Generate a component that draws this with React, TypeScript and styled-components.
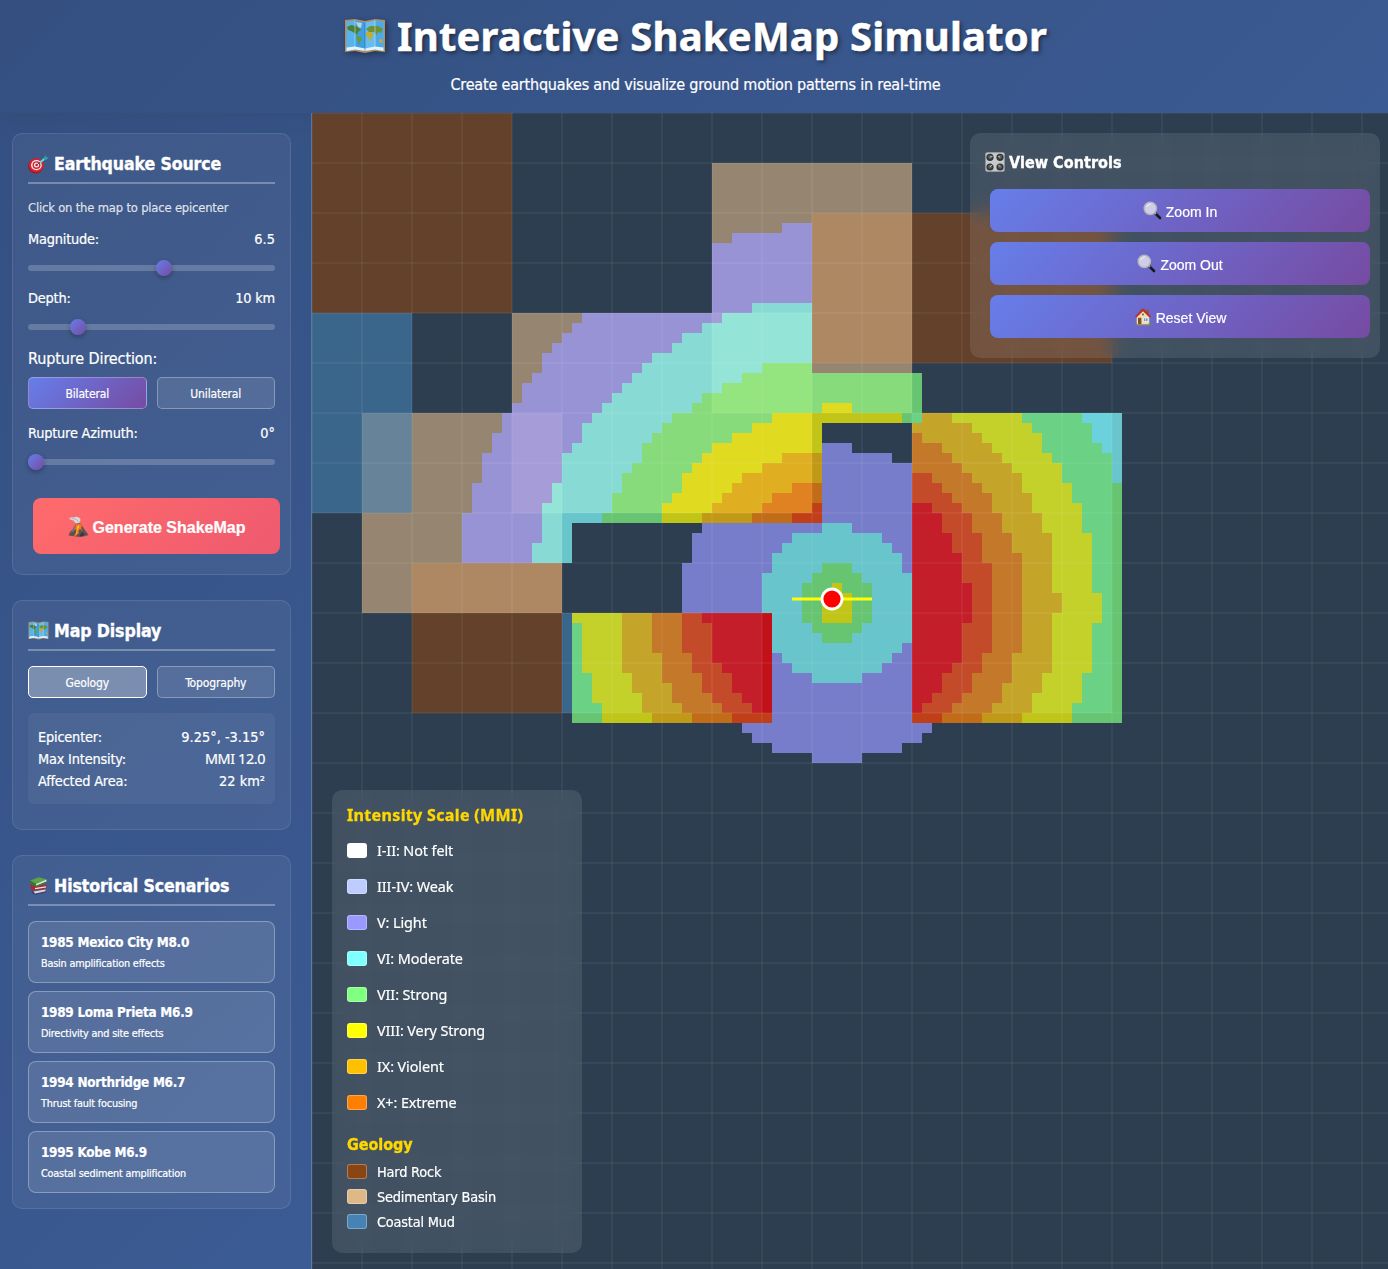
import React, { useState } from "react";
import styled, { createGlobalStyle, css } from "styled-components";

const ui = `"DejaVu Sans Condensed", "DejaVu Sans", sans-serif`;
const serifedI = `"Noto Sans", "DejaVu Sans", sans-serif`;
const arial = `"Liberation Sans", Arial, sans-serif`;
const accent = "linear-gradient(135deg, #667eea 0%, #764ba2 100%)";

const Global = createGlobalStyle`
  * { box-sizing: border-box; margin: 0; padding: 0; }
  body {
    margin: 0;
    overflow: hidden;
    color: #fff;
    font-family: ${ui};
    letter-spacing: -0.012em;
    -webkit-text-stroke: 0.2px;
    background: linear-gradient(135deg, #1e3c72 0%, #2a5298 100%);
    height: 100vh;
  }
`;

const Page = styled.div`
  display: flex;
  flex-direction: column;
  height: 100vh;
`;

const Header = styled.header`
  height: 113px;
  padding: 9px 0 0 3px;
  display: flex;
  flex-direction: column;
  align-items: center;
  background: rgba(255, 255, 255, 0.1);
  box-shadow: 0 2px 20px rgba(0, 0, 0, 0.1);
`;

const Title = styled.h1`
  display: flex;
  align-items: center;
  gap: 11px;
  height: 54px;
  font: 700 40px / 54px ${serifedI};
  letter-spacing: 0.2px;
  -webkit-text-stroke: 0.5px;
  text-shadow: 2px 2px 4px rgba(0, 0, 0, 0.5);
  svg { filter: drop-shadow(2px 2px 3px rgba(0, 0, 0, 0.4)); }
`;

const Subtitle = styled.p`
  margin-top: 12px;
  font-size: 16px;
  line-height: 20px;
`;

const Body = styled.div`
  flex: 1;
  min-height: 0;
  display: grid;
  grid-template-columns: 312px 1fr;
`;

const Sidebar = styled.aside`
  padding: 20px 20px 20px 12px;
  display: flex;
  flex-direction: column;
  gap: 25px;
  background: rgba(255, 255, 255, 0.1);
  border-right: 1px solid rgba(255, 255, 255, 0.2);
`;

const Section = styled.section<{ $h: number }>`
  height: ${(p) => p.$h}px;
  padding: 15px;
  border: 1px solid rgba(255, 255, 255, 0.1);
  border-radius: 10px;
  background: rgba(255, 255, 255, 0.05);
`;

const Heading = styled.h2`
  display: flex;
  gap: 5px;
  height: 35px;
  margin-bottom: 15px;
  border-bottom: 2px solid rgba(255, 255, 255, 0.3);
  font-size: 17.6px;
  line-height: 30px;
  letter-spacing: -0.12px;
  -webkit-text-stroke: 0.35px;
  svg { margin-top: 5px; }
`;

const Hint = styled.p`
  margin-bottom: 15px;
  font-size: 12.9px;
  line-height: 17px;
  letter-spacing: -0.19px;
  color: rgba(255, 255, 255, 0.8);
`;

const Row = styled.div`
  display: flex;
  justify-content: space-between;
  font-size: 14.4px;
  line-height: 17px;
`;

const Label = styled.div`
  margin: 0 0 9px;
  font-size: 16px;
  line-height: 19px;
  letter-spacing: -0.1px;
`;

const Range = styled.input`
  display: block;
  width: 100%;
  height: 6px;
  margin: 17px 0 19px;
  appearance: none;
  border-radius: 3px;
  background: rgba(255, 255, 255, 0.2);
  &::-webkit-slider-thumb {
    appearance: none;
    width: 16px;
    height: 16px;
    border-radius: 50%;
    background: ${accent};
    box-shadow: 0 2px 5px rgba(0, 0, 0, 0.3);
  }
`;

const Pair = styled.div<{ $gap: number }>`
  display: flex;
  gap: 10px;
  margin-bottom: ${(p) => p.$gap}px;
`;

const Toggle = styled.button<{ $look?: "gradient" | "light" }>`
  flex: 1;
  height: 32px;
  padding-top: 2px;
  border: 1px solid rgba(255, 255, 255, 0.3);
  border-radius: 5px;
  background: rgba(255, 255, 255, 0.1);
  color: #fff;
  font: 12px ${ui};
  letter-spacing: -0.012em;
  -webkit-text-stroke: 0.2px;
  ${(p) => p.$look === "gradient" && css`background: ${accent};`}
  ${(p) => p.$look === "light" && css`background: rgba(255, 255, 255, 0.3); border-color: #fff;`}
`;

const Button = styled.button<{ $primary?: boolean }>`
  display: flex;
  align-items: center;
  justify-content: center;
  gap: 4px;
  width: 100%;
  height: 43px;
  margin-left: 5px;
  padding-top: 2px;
  border: 0;
  border-radius: 8px;
  background: ${accent};
  color: #fff;
  font: 14px ${arial};
  letter-spacing: 0;
  -webkit-text-stroke: 0.2px;
  svg { margin-top: -2px; }
  ${(p) =>
    p.$primary &&
    css`
      height: 56px;
      margin-top: 33px;
      padding-top: 3px;
      background: linear-gradient(135deg, #ff6b6b, #ee5a6f);
      font-weight: 700;
      font-size: 16px;
    `}
`;

const Info = styled.div`
  padding: 13px 10px 12px;
  border-radius: 6px;
  background: rgba(255, 255, 255, 0.05);
  ${Row} { line-height: 22px; }
`;

const Value = styled.span`
  letter-spacing: 0.02px;
`;

const NumeralValue = styled.span`
  font-family: ${serifedI};
  letter-spacing: -0.4px;
`;

const Scenarios = styled.div`
  display: flex;
  flex-direction: column;
  gap: 8px;
`;

const Scenario = styled.div`
  height: 62px;
  padding: 12px;
  border: 1px solid rgba(255, 255, 255, 0.3);
  border-radius: 8px;
  background: rgba(255, 255, 255, 0.1);
`;

const ScenarioName = styled.div`
  font-weight: 700;
  font-size: 13.4px;
  line-height: 17px;
  letter-spacing: -0.26px;
`;

const ScenarioNote = styled.div`
  margin-top: 6px;
  font-size: 10.8px;
  line-height: 13px;
`;

const MapArea = styled.main`
  position: relative;
  overflow: hidden;
  background: #2c3e50;
`;

const MapSvg = styled.svg`
  display: block;
  width: 1076px;
  height: 1156px;
`;

const Floating = styled.div`
  position: absolute;
  border-radius: 10px;
  background: rgba(255, 255, 255, 0.1);
  backdrop-filter: blur(10px);
`;

const ViewPanel = styled(Floating)`
  top: 20px;
  right: 8px;
  width: 410px;
  height: 225px;
  padding: 15px;
`;

const ViewTitle = styled.h4`
  display: flex;
  align-items: center;
  gap: 4px;
  height: 28px;
  margin-bottom: 13px;
  font-size: 16px;
  letter-spacing: 0.05px;
  -webkit-text-stroke: 0.35px;
`;

const Stack = styled.div`
  display: flex;
  flex-direction: column;
  gap: 10px;
`;

const Legend = styled(Floating)`
  top: 677px;
  left: 20px;
  width: 250px;
  padding: 15px 15px 19px;
`;

const LegendTitle = styled.h4<{ $second?: boolean }>`
  margin: ${(p) => (p.$second ? "15px 0 4px" : "0 0 7px")};
  color: #ffd700;
  font: 700 16px / 20px ${(p) => (p.$second ? ui : serifedI)};
  letter-spacing: ${(p) => (p.$second ? "-0.05px" : "0.35px")};
  -webkit-text-stroke: 0.35px;
`;

const Item = styled.div<{ $h: number; $numeral?: boolean }>`
  display: flex;
  align-items: center;
  gap: 10px;
  height: ${(p) => p.$h}px;
  font-size: 14.4px;
  ${(p) => p.$numeral && css`font-family: ${serifedI}; letter-spacing: -0.006em;`}
`;

const Swatch = styled.span<{ $c: string }>`
  width: 20px;
  height: 15px;
  border: 1px solid rgba(255, 255, 255, 0.3);
  border-radius: 3px;
  background: ${(p) => p.$c};
`;

/* Icons */

const MapIcon = ({ w, h }: { w: number; h: number }) => (
  <svg width={w} height={h} viewBox="0 0 42 36" preserveAspectRatio="none">
    <path d="M1 2L11 1L21 3L31 1L41 2V34L31 33L21 35L11 33L1 34Z" fill="#b98d5c" />
    <path d="M2.5 3.500L11 2.500L21 4.500V33L11 31.500L2.500 33Z" fill="#55b4ee" />
    <path d="M21 4.500L31 2.500L39.500 3.500V33L31 31.500L21 33Z" fill="#66bdf2" />
    <path d="M11 2.500L21 4.500V33L11 31.500Z" fill="#3f9fe0" />
    <path d="M31 2.500L39.500 3.500V33L31 31.500Z" fill="#4caae6" />
    <path d="M2.500 29.500L11 28.500L21 30.500L31 28.500L39.500 29.500V33L31 31.500L21 33L11 31.500L2.500 33Z" fill="#e3f3fb" />
    <path d="M3 9L7 7L12 8L15 10L17 12L14 14L13 17L10.500 15L7 13L4 12Z" fill="#4f7f35" />
    <path d="M12 4L18 5L17 10L14 9Z" fill="#b9d4dc" />
    <path d="M13 17.500L17 19L18 21L16 24L15 27L14 24L12.500 20Z" fill="#6b9a38" />
    <path d="M22 11L26 8L34 8L39 11L37 15L34 14L33 17L30 14L25 14Z" fill="#6f9138" />
    <path d="M22 14L28 14L29.500 17L27.500 20L26 24L24.500 20L22 17.500Z" fill="#bfae3c" />
    <path d="M35 22L38 21L38.500 24.500L36 25Z" fill="#e0a030" />
    <path d="M11 2.500V31.500M31 2.500V31.500" stroke="#d9f0fb" strokeWidth=".7" opacity=".7" />
    <path d="M21 4.500V33" stroke="#2470a8" strokeWidth=".8" opacity=".7" />
  </svg>
);

const DartIcon = () => (
  <svg width="21" height="20" viewBox="0 0 21 20">
    <ellipse cx="7.800" cy="12" rx="7.600" ry="7.500" fill="#a3121c" />
    <ellipse cx="8.300" cy="11.300" rx="7.300" ry="7.100" fill="#d9222d" />
    <ellipse cx="8.400" cy="11.200" rx="5.300" ry="5.100" fill="#f4eeee" />
    <ellipse cx="8.500" cy="11.100" rx="4" ry="3.900" fill="#d2222c" />
    <ellipse cx="8.500" cy="11.100" rx="2.600" ry="2.500" fill="#f4eeee" />
    <circle cx="8.600" cy="11" r="1.300" fill="#c81c28" />
    <path d="M8.600 11L14 6.800" stroke="#555" strokeWidth="1" />
    <path d="M12 8.500L17.500 4" stroke="#6fd6df" strokeWidth="2" />
    <path d="M15.500 4.500L17.500 1L18.300 3L20.800 3.500L18.500 5.800L16.500 6Z" fill="#2f9fa5" />
  </svg>
);

const BooksIcon = () => (
  <svg width="21" height="20" viewBox="0 0 21 20">
    <path d="M3 13L5 15.500L17 13.500L18.500 15L18 16.500L7 18.800L4 17Z" fill="#423f68" />
    <path d="M5.500 15.500L17.500 13.600V15.300L7 17.500Z" fill="#dddbdc" />
    <path d="M2.500 8L6 10.500L18.500 8.500V10L18 12.500L6 14.500L2.500 12Z" fill="#b7232d" />
    <path d="M7 12L18 10.200V11.600L7 13.300Z" fill="#f1e9e2" />
    <path d="M2 4.500L11 1.200L18.500 3.500L8 8Z" fill="#5da544" />
    <path d="M2 4.500L8 8V10.800L3 8Q1 6 2 4.500Z" fill="#327a2e" />
    <path d="M8 8L18.500 3.600V5.500L8 9.800Z" fill="#dfe6d4" />
    <path d="M8 9.800L18.500 5.500V6.800L8 11.300Z" fill="#398038" />
  </svg>
);

const VolcanoIcon = () => (
  <svg width="21" height="21" viewBox="0 0 21 21">
    <path d="M1 2.500Q3.500 .5 5.500 1.500Q9-.3 11 1.800Q13.500 3 11.700 5.500L11 8H8.500Q7 6.500 5.500 4.500Q3 4.500 1 2.500Z" fill="#d7d9dc" />
    <path d="M3 2.800Q6 2 8 3.500Q10 4 10 6" fill="none" stroke="#a9adb3" strokeWidth=".8" />
    <path d="M.5 19.500Q2 15 5 13L8 7.500L12.500 7L15.500 12L20.500 19Q15 21.500 8 20.500Z" fill="#5c5350" />
    <path d="M8 7.500L5.500 13L2.500 17L7 14Z" fill="#867970" />
    <path d="M8 7.500Q10 9 12.500 7L14 10L13 12L15 15L12 13L10.500 15L11 17L7.500 20.300H6L8.500 15L7 12.500Z" fill="#f37721" />
    <path d="M10 9L11.500 11L9.500 13.500L9 17L8 18L9 13Z" fill="#ffc739" />
    <path d="M14 16L16.500 18L15 20.300L11 20.500Z" fill="#38383d" />
  </svg>
);

const KnobsIcon = () => (
  <svg width="20" height="20" viewBox="0 0 20 20">
    <rect x=".3" y=".3" width="19.400" height="19.400" rx="2" fill="#afb2b3" />
    <rect x="1.300" y="1.300" width="17.400" height="17.400" rx="1.500" fill="#c8cacb" />
    {[[5, 5.3], [15, 5.3], [5, 15], [15, 15]].map(([x, y]) => (
      <g key={`${x}-${y}`}>
        <circle cx={x} cy={y} r="3.600" fill="#333638" />
        <circle cx={x} cy={y - 0.3} r="2" fill="#5d6164" />
        <path d={`M${x} ${y - 0.3}l${x < 10 ? 2.6 : -1.8} ${y < 10 ? -0.6 : -2}`} stroke="#d8dadb" strokeWidth=".8" />
      </g>
    ))}
  </svg>
);

const MagnifierIcon = () => (
  <svg width="19" height="19" viewBox="0 0 19 19">
    <path d="M12 12L17 17" stroke="#191919" strokeWidth="2.600" strokeLinecap="round" />
    <path d="M11 11L13 13" stroke="#9b9ba0" strokeWidth="1.800" />
    <circle cx="7.300" cy="7.300" r="6.200" fill="#cfcde8" stroke="#b4b4ba" strokeWidth="1.400" />
    <path d="M3.500 6Q5 3 8 3" fill="none" stroke="#e9e9f6" strokeWidth="1.200" />
  </svg>
);

const HouseIcon = () => (
  <svg width="18" height="18" viewBox="0 0 18 18">
    <rect x="12.500" y="1.500" width="2.200" height="5" fill="#a0522d" />
    <path d="M2.700 8L9 2.500L15.300 8V16.500H2.700Z" fill="#f3dcae" />
    <path d="M.8 8.800L8 .8H10L17.200 8.800L15.500 9.500L9 3.200L2.500 9.500Z" fill="#b5322c" />
    <rect x="4" y="9.800" width="3.400" height="6.700" fill="#80502e" />
    <rect x="9.300" y="9.700" width="4.700" height="4" fill="#fff" />
    <path d="M9.800 10.200h1.700v3H9.800zM12 10.200h1.600v3H12z" fill="#54a6d6" />
    <circle cx="9" cy="6.500" r="1" fill="#7c5a3a" />
    <path d="M.3 17.300Q.5 15.300 3 15.600V17.300ZM14.500 17.300V15.600Q17.500 15.200 17.700 17.300Z" fill="#4f9b35" />
    <rect x="2.700" y="16.200" width="12.600" height="1.200" fill="#a58a6c" />
  </svg>
);

/* Map data: coordinates in 10px cells */

const geology: [string, number, number, number, number][] = [
  ["#8b4513", 0, 0, 20, 20],
  ["#8b4513", 50, 10, 30, 15],
  ["#8b4513", 10, 45, 15, 15],
  ["#deb887", 20, 20, 30, 20],
  ["#deb887", 40, 5, 20, 25],
  ["#deb887", 5, 30, 20, 20],
  ["#4682b4", 0, 20, 10, 20],
  ["#4682b4", 60, 30, 20, 30],
  ["#4682b4", 25, 50, 20, 10],
];

const levels: Record<string, string> = {
  a: "#9999ff",
  b: "#80ffff",
  c: "#80ff80",
  d: "#ffff00",
  e: "#ffc000",
  f: "#ff8000",
  g: "#ff4000",
  h: "#ff0000",
};

/* Each row: start column, then runs of level letter + end column; "." is an empty run. */
const firstRow = 11;
const rows = [
  "47 a50",
  "42 a50",
  "40 a50",
  "40 a50",
  "40 a50",
  "40 a50",
  "40 a50",
  "40 a50",
  "40 a44 b50",
  "27 a41 b50",
  "26 a39 b50",
  "25 a37 b50",
  "24 a36 b50",
  "23 a34 b50",
  "23 a33 b45 c50",
  "22 a32 b43 c61",
  "21 a31 b41 c61",
  "21 a30 b39 c61",
  "20 a29 b38 c51 d54 c61",
  "19 a28 b36 c46 d59 c61 e64 d71 c77 b81",
  "19 a27 b35 c44 d51 .60 e66 d72 c78 b81",
  "18 a27 b34 c42 d51 .60 f61 e67 d73 c78 b81",
  "18 a26 b33 c40 d51 a54 .60 f63 e68 d73 c79 b81",
  "17 a25 b33 c39 d47 e51 a58 .60 f64 e69 d74 c80 b81",
  "17 a25 b32 c38 d45 e51 a60 f65 e70 d75 c80 b81",
  "17 a25 b31 c37 d43 e51 a60 g62 f66 e71 d75 c80 b81",
  "16 a24 b31 c37 d42 e48 f51 a60 g63 f67 e71 d76 c81",
  "16 a24 b30 c36 d41 e46 f51 a60 g64 f68 e72 d76 c81",
  "16 a23 b30 c35 d40 e45 f50 g51 a60 h62 g65 f68 e72 d77 c81",
  "15 a23 b29 c35 d39 e44 f48 g51 a60 h63 g66 f69 e73 d77 c81",
  "15 a23 b26 .39 a51 b54 a60 h63 g66 f69 e73 d77 c81",
  "15 a23 b26 .38 a48 b57 a60 h64 g67 f70 e74 d78 c81",
  "15 a22 b26 .38 a47 b58 a60 h64 g67 f70 e74 d78 c81",
  "15 a22 b26 .38 a46 b59 a60 h65 g67 f71 e74 d78 c81",
  "37 a46 b51 c54 b59 a60 h65 g68 f71 e74 d78 c81",
  "37 a45 b50 c55 b60 h65 g68 f71 e74 d78 c81",
  "37 a45 b49 c52 d53 c56 b60 h66 g68 f71 e74 d78 c81",
  "37 a45 b49 c52 d54 c56 b60 h66 g68 f71 e75 d79 c81",
  "37 a45 b49 c51 d54 c56 b60 h66 g68 f71 e75 d79 c81",
  "26 d31 e34 f37 g39 h46 b49 c51 d54 c56 b60 h66 g68 f71 e74 d79 c81",
  "26 c27 d31 e34 f37 g40 h46 b50 c55 b60 h65 g68 f71 e74 d78 c81",
  "26 c27 d31 e34 f37 g40 h46 b51 c54 b60 h65 g68 f71 e74 d78 c81",
  "26 c27 d31 e34 f37 g40 h46 b59 a60 h65 g68 f71 e74 d78 c81",
  "26 c27 d31 e35 f38 g40 h46 a47 b58 a60 h65 g67 f70 e74 d78 c81",
  "26 c27 d31 e35 f38 g41 h46 a48 b57 a60 h64 g67 f70 e74 d78 c81",
  "26 c28 d32 e35 f39 g42 h46 a50 b55 a60 h63 g66 f70 e73 d77 c81",
  "26 c28 d32 e36 f39 g42 h46 a60 h63 g66 f69 e73 d77 c81",
  "26 c28 d33 e36 f40 g43 h46 a60 h62 g65 f69 e72 d77 c81",
  "26 c29 d33 e37 f41 g44 h46 a60 h61 g64 f68 e72 d76 c81",
  "26 c29 d34 e38 f42 g46 a60 g63 f67 e71 d76 c81",
  "43 a62",
  "44 a61",
  "46 a59",
  "50 a55",
];

const cells = rows.flatMap((row, i) => {
  const [start, ...runs] = row.split(" ");
  let x = Number(start);
  return runs.flatMap((run) => {
    const end = Number(run.slice(1));
    const from = x;
    x = end;
    return run[0] === "." ? [] : [{ x: from, y: firstRow + i, w: end - from, c: levels[run[0]] }];
  });
});

const ShakeMap = () => (
  <MapSvg viewBox="0 0 1076 1156">
    <g shapeRendering="crispEdges">
      {geology.map(([c, x, y, w, h], i) => (
        <rect key={i} x={x * 10} y={y * 10} width={w * 10} height={h * 10} fill={c} fillOpacity=".6" />
      ))}
      {cells.map((r, i) => (
        <rect key={i} x={r.x * 10} y={r.y * 10} width={r.w * 10} height="10" fill={r.c} fillOpacity=".7" />
      ))}
    </g>
    <g stroke="#fff" strokeOpacity=".05" strokeWidth="2">
      {Array.from({ length: 22 }, (_, i) => (
        <path key={`v${i}`} d={`M${i * 50} 0V1156`} />
      ))}
      {Array.from({ length: 24 }, (_, i) => (
        <path key={`h${i}`} d={`M0 ${i * 50}H1076`} />
      ))}
    </g>
    <path d="M480 486H560" stroke="#ff0" strokeWidth="3" />
    <circle cx="520" cy="486" r="10" fill="#f00" stroke="#fff" strokeWidth="2.800" />
  </MapSvg>
);

const intensity: [string, string][] = [
  ["#ffffff", "I-II: Not felt"],
  ["#bfccff", "III-IV: Weak"],
  ["#9999ff", "V: Light"],
  ["#80ffff", "VI: Moderate"],
  ["#80ff80", "VII: Strong"],
  ["#ffff00", "VIII: Very Strong"],
  ["#ffc000", "IX: Violent"],
  ["#ff8000", "X+: Extreme"],
];

const rocks: [string, string][] = [
  ["#8b4513", "Hard Rock"],
  ["#deb887", "Sedimentary Basin"],
  ["#4682b4", "Coastal Mud"],
];

const scenarios = [
  ["1985 Mexico City M8.0", "Basin amplification effects"],
  ["1989 Loma Prieta M6.9", "Directivity and site effects"],
  ["1994 Northridge M6.7", "Thrust fault focusing"],
  ["1995 Kobe M6.9", "Coastal sediment amplification"],
];

export default function App() {
  const [magnitude, setMagnitude] = useState(6.5);
  const [depth, setDepth] = useState(10);
  const [azimuth, setAzimuth] = useState(0);
  return (
    <Page>
      <Global />
      <Header>
        <Title>
          <MapIcon w={42} h={36} />
          Interactive ShakeMap Simulator
        </Title>
        <Subtitle>Create earthquakes and visualize ground motion patterns in real-time</Subtitle>
      </Header>
      <Body>
        <Sidebar>
          <Section $h={442}>
            <Heading><DartIcon />Earthquake Source</Heading>
            <Hint>Click on the map to place epicenter</Hint>
            <Row><span>Magnitude:</span><Value>{magnitude}</Value></Row>
            <Range type="range" min={4} max={8.5} step={0.1} value={magnitude} onChange={(e) => setMagnitude(+e.target.value)} />
            <Row><span>Depth:</span><span>{depth} km</span></Row>
            <Range type="range" min={1} max={50} value={depth} onChange={(e) => setDepth(+e.target.value)} />
            <Label>Rupture Direction:</Label>
            <Pair $gap={16}>
              <Toggle $look="gradient">Bilateral</Toggle>
              <Toggle>Unilateral</Toggle>
            </Pair>
            <Row><span>Rupture Azimuth:</span><Value>{azimuth}°</Value></Row>
            <Range type="range" min={0} max={360} value={azimuth} onChange={(e) => setAzimuth(+e.target.value)} />
            <Button $primary><VolcanoIcon />Generate ShakeMap</Button>
          </Section>
          <Section $h={230}>
            <Heading><MapIcon w={21} h={19} />Map Display</Heading>
            <Pair $gap={15}>
              <Toggle $look="light">Geology</Toggle>
              <Toggle>Topography</Toggle>
            </Pair>
            <Info>
              <Row><span>Epicenter:</span><Value>9.25°, -3.15°</Value></Row>
              <Row><span>Max Intensity:</span><NumeralValue>MMI 12.0</NumeralValue></Row>
              <Row><span>Affected Area:</span><Value>22 km²</Value></Row>
            </Info>
          </Section>
          <Section $h={354}>
            <Heading><BooksIcon />Historical Scenarios</Heading>
            <Scenarios>
              {scenarios.map(([name, note]) => (
                <Scenario key={name}>
                  <ScenarioName>{name}</ScenarioName>
                  <ScenarioNote>{note}</ScenarioNote>
                </Scenario>
              ))}
            </Scenarios>
          </Section>
        </Sidebar>
        <MapArea>
          <ShakeMap />
          <ViewPanel>
            <ViewTitle><KnobsIcon />View Controls</ViewTitle>
            <Stack>
              <Button><MagnifierIcon />Zoom In</Button>
              <Button><MagnifierIcon />Zoom Out</Button>
              <Button><HouseIcon />Reset View</Button>
            </Stack>
          </ViewPanel>
          <Legend>
            <LegendTitle>Intensity Scale (MMI)</LegendTitle>
            {intensity.map(([c, t]) => (
              <Item key={t} $h={36} $numeral><Swatch $c={c} />{t}</Item>
            ))}
            <LegendTitle $second>Geology</LegendTitle>
            {rocks.map(([c, t]) => (
              <Item key={t} $h={25}><Swatch $c={c} />{t}</Item>
            ))}
          </Legend>
        </MapArea>
      </Body>
    </Page>
  );
}
